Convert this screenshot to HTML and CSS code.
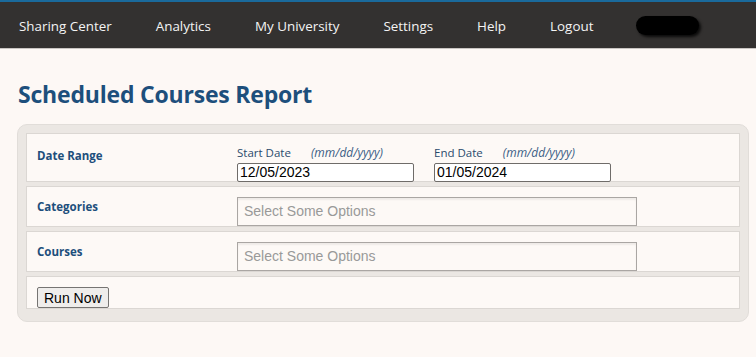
FILE: index.html
```html
<!DOCTYPE html>
<html>
  <head>
    <title>Scheduled Courses Report</title>
    <link rel="stylesheet" href="styles.css">
  </head>
  <body>
    <div class="topbar">
      <nav class="nav">
        <a href="#">Sharing Center</a>
        <a href="#">Analytics</a>
        <a href="#">My University</a>
        <a href="#">Settings</a>
        <a href="#">Help</a>
        <a href="#">Logout</a>
        <span class="user-pill"></span>
      </nav>
    </div>

    <div class="content">
      <h1 class="page-title">Scheduled Courses Report</h1>

      <div class="panel">
        <div class="row row-dates">
          <div class="label">Date Range</div>
          <div class="field dates">
            <div class="date-group">
              <div class="date-caption">Start Date <em>(mm/dd/yyyy)</em></div>
              <input class="date-input" type="text" value="12/05/2023">
            </div>
            <div class="date-group">
              <div class="date-caption">End Date <em>(mm/dd/yyyy)</em></div>
              <input class="date-input" type="text" value="01/05/2024">
            </div>
          </div>
        </div>

        <div class="row">
          <div class="label">Categories</div>
          <div class="field">
            <div class="multi-select">Select Some Options</div>
          </div>
        </div>

        <div class="row">
          <div class="label">Courses</div>
          <div class="field">
            <div class="multi-select">Select Some Options</div>
          </div>
        </div>

        <div class="row row-actions">
          <button class="run-btn" type="button">Run Now</button>
        </div>
      </div>
    </div>
  </body>
</html>
```

FILE: styles.css
```css
body {
  margin: 0;
  background: #fdf8f5;
  font-family: "Open Sans", "Noto Sans", sans-serif;
}

.topbar {
  background: #333130;
  border-top: 2px solid #1a6a9c;
  border-bottom: 1px solid #c9c5c2;
  height: 46px;
}

.nav {
  display: flex;
  align-items: center;
  gap: 44px;
  height: 100%;
  padding-left: 19px;
  padding-top: 1px;
  box-sizing: border-box;
}

.nav a {
  color: #f4f4f4;
  text-decoration: none;
  font-size: 13.4px;
}

.user-pill {
  width: 63px;
  height: 19px;
  margin-left: -1px;
  border-radius: 10px;
  background: #000;
  box-shadow: 2px 2px 3px rgba(0, 0, 0, 0.8);
}

.content {
  padding: 0 17px;
}

.page-title {
  margin: 0;
  padding: 29px 0 14px 1px;
  color: #1d4f7c;
  font-size: 23px;
  font-weight: 700;
  letter-spacing: -0.2px;
}

.panel {
  width: 714px;
  padding: 8px 8px 12px 8px;
  background: #ebe7e3;
  border: 1px solid #e1ddd9;
  border-radius: 10px;
  display: flex;
  flex-direction: column;
  gap: 4px;
}

.row {
  display: flex;
  background: #fdf9f6;
  border: 1px solid #dbd7d3;
  padding: 10px 10px 0 10px;
  height: 29px;
}

.row-dates {
  padding-top: 12px;
  height: 35px;
}

.row-actions {
  height: 21px;
}

.label {
  width: 200px;
  flex: none;
  padding-top: 2px;
  color: #1d4f7c;
  font-size: 11.5px;
  font-weight: 700;
}

.field {
  flex: 1;
}

.dates {
  display: flex;
  gap: 20px;
}

.date-caption {
  color: #2a4a6c;
  font-size: 11.5px;
  height: 14px;
  line-height: 14px;
}

.date-caption em {
  margin-left: 17px;
  font-size: 12px;
  color: #3b5d85;
}

.date-input {
  width: 171px;
  height: 15px;
  margin: 0;
  padding: 1px 2px;
  border: 1px solid #6f6c69;
  border-radius: 2px;
  background: #fff;
  font-family: "Liberation Sans", Arial, sans-serif;
  font-size: 14px;
  color: #000;
}

.multi-select {
  width: 392px;
  height: 27px;
  line-height: 27px;
  padding-left: 6px;
  border: 1px solid #aaa6a3;
  background: #fdf9f6;
  box-shadow: inset 0 2px 2px rgba(0, 0, 0, 0.06);
  color: #999;
  font-family: "Liberation Sans", Arial, sans-serif;
  font-size: 14px;
}

.run-btn {
  height: 21px;
  padding: 0 6px;
  margin: 0;
  border: 1px solid #767472;
  border-radius: 2px;
  background: #efedeb;
  font-family: "Liberation Sans", Arial, sans-serif;
  font-size: 14px;
  color: #000;
}
```
